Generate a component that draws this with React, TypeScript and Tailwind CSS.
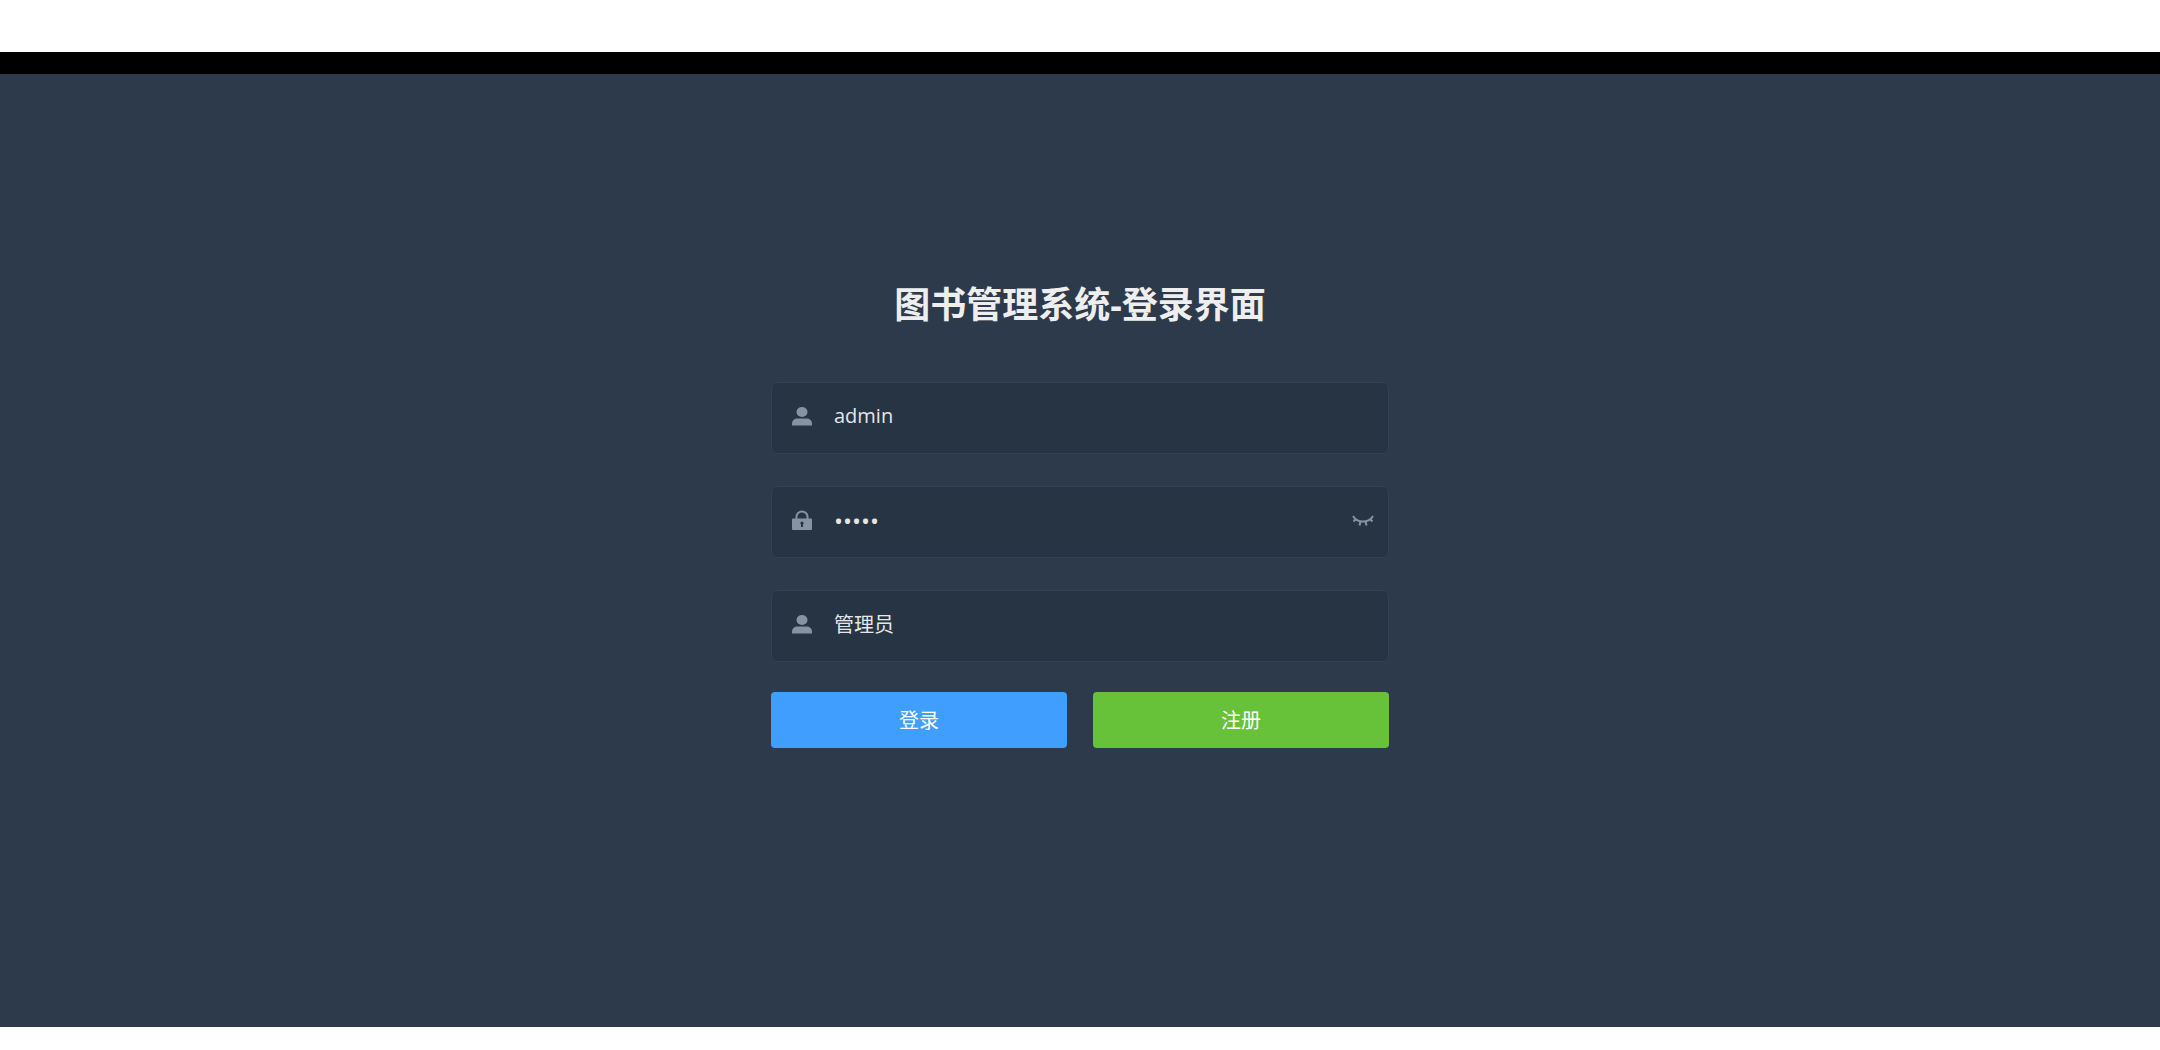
import type { ReactNode } from 'react'

type FieldProps = {
  id: string
  label: string
  icon: ReactNode
  value: string
  type?: string
  action?: ReactNode
}

function UserIcon() {
  return (
    <svg viewBox="0 0 20 20" className="size-5" fill="currentColor" aria-hidden="true">
      <ellipse cx="10" cy="6" rx="5.500" ry="5" />
      <path d="M0 19.500v-2C0 14.500 2.500 12.500 5.500 12.500h9c3 0 5.500 2 5.500 5v2z" />
    </svg>
  )
}

function LockIcon() {
  return (
    <svg viewBox="0 0 20 20" className="size-5" aria-hidden="true">
      <path d="M4.500 9V6.500a5.500 5 0 0 1 11 0V9" fill="none" stroke="currentColor" strokeWidth="2" />
      <path
        fill="currentColor"
        fillRule="evenodd"
        d="M1 8.500h18a1 1 0 0 1 1 1V19a1 1 0 0 1-1 1H1a1 1 0 0 1-1-1V9.500a1 1 0 0 1 1-1zM10 11.500a1.700 1.700 0 0 0-1 3V17h2v-2.500a1.700 1.700 0 0 0-1-3z"
      />
    </svg>
  )
}

function EyeClosedIcon() {
  return (
    <svg viewBox="0 0 22 20" className="h-5 w-[22px]" fill="none" stroke="currentColor" strokeWidth="2" aria-hidden="true">
      <path d="M1 6C3 9.500 6.500 11.500 11 11.500S19 9.500 21 6M4 9l-2.500 2.500M18 9l2.500 2.500M8.500 11.500l-1 4M13.500 11.500l1 4" />
    </svg>
  )
}

function Field({ id, label, icon, value, type = 'text', action }: FieldProps) {
  return (
    <div className="flex h-[72px] items-center rounded-md border border-[#334252] bg-[#273443] pr-3.5 pb-1 pl-5 text-[#8694a1]">
      <label htmlFor={id} aria-label={label}>
        {icon}
      </label>
      <input
        id={id}
        type={type}
        defaultValue={value}
        className="h-full min-w-0 flex-1 bg-transparent px-[22px] pb-0.5 text-xl text-[#e4e6e8] outline-none [&[type=password]]:pb-0 [&[type=password]]:text-2xl"
      />
      {action}
    </div>
  )
}

export default function App() {
  return (
    <div className="flex min-h-screen flex-col bg-white pt-[52px] pb-[23px] font-['Open_Sans','Noto_Sans_CJK_SC',sans-serif]">
      <main className="flex flex-1 flex-col items-center border-t-[22px] border-black bg-[#2d3a4b] px-6 pt-[207px]">
        <form className="w-full max-w-[618px]" onSubmit={(e) => e.preventDefault()}>
          <h1 className="mb-[53px] text-center text-4xl leading-12 font-bold text-[#eeeeee]">图书管理系统-登录界面</h1>
          <div className="flex flex-col gap-8">
            <Field id="username" label="用户名" icon={<UserIcon />} value="admin" />
            <Field
              id="password"
              label="密码"
              icon={<LockIcon />}
              value="admin"
              type="password"
              action={
                <button type="button" aria-label="显示密码">
                  <EyeClosedIcon />
                </button>
              }
            />
            <Field id="role" label="角色" icon={<UserIcon />} value="管理员" />
          </div>
          <div className="mt-[30px] grid grid-cols-2 gap-[26px] text-xl text-white">
            <button type="submit" className="h-14 rounded-sm bg-[#409eff] pt-0.5">
              登录
            </button>
            <button type="button" className="h-14 rounded-sm bg-[#67c23a] pt-0.5">
              注册
            </button>
          </div>
        </form>
      </main>
    </div>
  )
}
